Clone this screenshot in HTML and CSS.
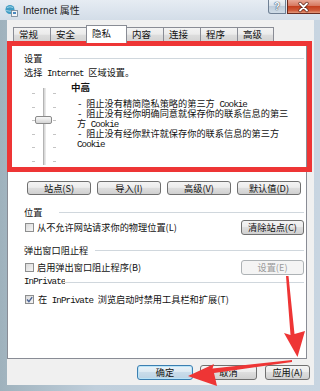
FILE: index.html
```html
<!DOCTYPE html>
<html lang="zh-CN">
<head>
<meta charset="utf-8">
<title>Internet 属性</title>
<link rel="stylesheet" href="styles.css">
</head>
<body>
<div class="window">
  <div class="titlebar">
    <svg class="app-icon" viewBox="0 0 13 13" width="13" height="13">
      <circle cx="5" cy="5.5" r="4.5" fill="#3f9cc4"/>
      <path d="M2 3.5 Q5 2 8 3.5 M1.2 6.5 Q5 8 8.8 6.5" stroke="#b8e2f0" stroke-width="0.8" fill="none"/>
      <rect x="6.5" y="6.5" width="6" height="6" fill="#f2f4f6" stroke="#6f8293" stroke-width="0.8"/>
      <rect x="8" y="8" width="3" height="2" fill="#4a88c0"/>
    </svg>
    <span class="title">Internet 属性</span>
    <div class="caption">
      <div class="cap-help">?</div>
      <div class="cap-close">
        <svg viewBox="0 0 33 14" width="33" height="14"><path d="M13 3.5 L20 10.5 M20 3.5 L13 10.5" stroke="#5b2418" stroke-width="3.2" stroke-linecap="round"/><path d="M13 3.5 L20 10.5 M20 3.5 L13 10.5" stroke="#ffffff" stroke-width="1.8" stroke-linecap="round"/></svg>
      </div>
    </div>
  </div>
  <div class="frame">
    <div class="client">
      <div class="tabs">
        <div class="tab t1">常规</div>
        <div class="tab t2">安全</div>
        <div class="tab sel">隐私</div>
        <div class="tab t4">内容</div>
        <div class="tab t5">连接</div>
        <div class="tab t6">程序</div>
        <div class="tab t7">高级</div>
      </div>
      <div class="panel">
        <div class="ghead"><span class="lbl w35">设置</span></div>
        <div class="intro">选择<span class="en"> Internet </span>区域设置。</div>
        <div class="level">
          <div class="slider">
            <div class="ticks"><i></i><i></i><i></i><i></i><i></i><i></i></div>
            <div class="track"></div>
            <div class="ticks"><i></i><i></i><i></i><i></i><i></i><i></i></div>
            <div class="thumb"></div>
          </div>
          <div class="level-text">
            <div class="level-name">中高</div>
            <div class="desc">
              <div><span class="en">- </span>阻止没有精简隐私策略的第三方<span class="en"> Cookie</span></div>
              <div><span class="en">- </span>阻止没有经你明确同意就保存你的联系信息的第三</div>
              <div>方<span class="en"> Cookie</span></div>
              <div><span class="en">- </span>阻止没有经你默许就保存你的联系信息的第三方</div>
              <div><span class="en">Cookie</span></div>
            </div>
          </div>
        </div>
        <div class="btn-row">
          <button class="btn">站点(S)</button>
          <button class="btn">导入(I)</button>
          <button class="btn">高级(V)</button>
          <button class="btn">默认值(D)</button>
        </div>
        <div class="ghead g2"><span class="lbl w35">位置</span></div>
        <div class="check-row r1">
          <span class="check"></span>
          <span class="check-label">从不允许网站请求你的物理位置(L)</span>
          <button class="btn row-btn">清除站点(C)</button>
        </div>
        <div class="ghead g3"><span class="lbl w71">弹出窗口阻止程</span></div>
        <div class="check-row r2">
          <span class="check"></span>
          <span class="check-label">启用弹出窗口阻止程序(B)</span>
          <button class="btn row-btn disabled">设置(E)</button>
        </div>
        <div class="ghead g4"><span class="lbl en w41">InPrivate</span></div>
        <div class="check-row r3">
          <span class="check checked"><svg viewBox="0 0 7 7" width="7" height="7"><path d="M1 3.6 L2.9 5.6 L6.2 1.2" stroke="#4a6395" stroke-width="1.4" fill="none"/></svg></span>
          <span class="check-label l3">在<span class="en"> InPrivate </span>浏览启动时禁用工具栏和扩展(T)</span>
        </div>
      </div>
      <div class="footer">
        <button class="btn fbtn ok">确定</button>
        <button class="btn fbtn cancel">取消</button>
        <button class="btn fbtn apply">应用(A)</button>
      </div>
    </div>
  </div>
  <div class="annot">
    <div class="redbox"></div>
    <svg class="arrows" viewBox="0 0 320 391" width="320" height="391">
      <polygon points="286,276 288.5,276 294.5,334 305,331 297.5,357 284,333 290.5,335" fill="#ee3535"/>
      <polygon points="188,376 214,364 212.5,368.5 292,360 292,362 214,373 217,386" fill="#ee3535"/>
    </svg>
  </div>
</div>
</body>
</html>
```

FILE: styles.css
```css
* { box-sizing: border-box; }
html, body { margin: 0; padding: 0; }
body {
  width: 320px;
  height: 391px;
  overflow: hidden;
  background: #b9c8d6;
  font-family: "Noto Sans CJK SC", "Liberation Sans", sans-serif;
  font-size: 9.2px;
  color: #111;
}
.window {
  position: relative;
  width: 320px;
  height: 391px;
  display: flex;
  flex-direction: column;
  background: linear-gradient(90deg, #9fb2bd, #c0cfdc 30%, #c8d5e1);
}
.titlebar {
  height: 20px;
  flex: none;
  display: flex;
  align-items: flex-start;
  background: linear-gradient(#e6ecf3, #d3dde8);
}
.app-icon { flex: none; margin: 4px 0 0 5px; }
.title {
  font-family: "Liberation Sans", "Noto Sans CJK SC", sans-serif;
  font-size: 10px;
  line-height: 21px;
  margin-left: 5px;
  color: #1c1c1c;
}
.caption { margin-left: auto; display: flex; }
.cap-help {
  width: 18px;
  height: 14px;
  margin-right: 1px;
  border: 1px solid #6f8094;
  border-top: none;
  border-radius: 0 0 0 3px;
  background: linear-gradient(#eef2f6, #d8e1ea 45%, #bfcddb 50%, #cfdbe6);
  font-family: "Liberation Sans", sans-serif;
  font-weight: bold;
  font-size: 10px;
  line-height: 13px;
  text-align: center;
  color: #f8fbff;
  text-shadow: 0 0 1px #2b3d56, 0 0 1px #2b3d56;
}
.cap-close {
  width: 33px;
  height: 14px;
  border: 1px solid #6a2a1e;
  border-top: none;
  border-right: none;
  background: linear-gradient(#e8a896, #d6775f 45%, #c4401f 50%, #cf5a39 80%, #e49a7c);
}
.cap-close svg { display: block; margin-left: -1px; }
.frame {
  flex: 1;
  padding: 0 6px 6px 7px;
  display: flex;
}
.client {
  flex: 1;
  background: #f0f0f0;
  display: flex;
  flex-direction: column;
}
.tabs {
  height: 22px;
  flex: none;
  padding: 5px 0 0 6px;
  display: flex;
  align-items: flex-end;
}
.tab {
  height: 15px;
  border: 1px solid #898c95;
  border-bottom: none;
  margin-right: -1px;
  background: linear-gradient(#f3f3f3, #ebebeb 45%, #dddddd 50%, #d2d2d2);
  padding-left: 5px;
  font-size: 9.5px;
  line-height: 13px;
  white-space: nowrap;
  color: #111;
}
.t1 { width: 38px; }
.t2 { width: 37px; }
.sel {
  width: 41px;
  height: 18px;
  margin-bottom: -1px;
  background: #ffffff;
  position: relative;
  z-index: 1;
  line-height: 14px;
}
.t4 { width: 38px; }
.t5 { width: 38px; }
.t6 { width: 38px; }
.t7 { width: 37px; }
.panel {
  width: 300px;
  height: 317px;
  flex: none;
  border: 1px solid #898c95;
  background: #ffffff;
  padding: 9px 2px 0 16px;
  display: flex;
  flex-direction: column;
}
.en {
  font-family: "Liberation Mono", monospace;
  letter-spacing: -0.92px;
  white-space: pre;
}
.ghead {
  display: flex;
  align-items: center;
  height: 12px;
  line-height: 12px;
  flex: none;
}
.ghead::after {
  content: "";
  flex: 1;
  height: 1px;
  background: #d0d7dd;
}
.lbl { white-space: nowrap; overflow: hidden; flex: none; }
.w35 { width: 35px; }
.w71 { width: 71px; }
.w41 { width: 41px; }
.intro {
  margin-top: 2px;
  height: 12px;
  line-height: 12px;
  white-space: nowrap;
}
.level {
  margin-top: 2px;
  height: 88px;
  flex: none;
  display: flex;
}
.slider {
  position: relative;
  width: 24px;
  margin-left: 8px;
  display: flex;
  justify-content: space-between;
  align-items: flex-start;
}
.ticks {
  width: 3px;
  height: 69px;
  margin-top: 13px;
  display: flex;
  flex-direction: column;
  justify-content: space-between;
}
.ticks i { display: block; height: 1px; background: #c4c4c4; }
.track {
  width: 3px;
  height: 77px;
  margin-top: 8px;
  border-left: 1px solid #b4b4b4;
  border-right: 1px solid #e8e8e8;
  background: #d9d9d9;
}
.thumb {
  position: absolute;
  left: 3px;
  top: 36px;
  width: 17px;
  height: 8px;
  border: 1px solid #8a8a8a;
  border-radius: 2px;
  background: linear-gradient(#f7f7f7, #e6e6e6 50%, #d4d4d4);
}
.level-text { margin-left: 15px; }
.level-name {
  margin-top: 1px;
  height: 12px;
  line-height: 12px;
  font-weight: bold;
  font-size: 9.5px;
}
.desc {
  margin-top: 5px;
  margin-left: 6px;
  line-height: 10px;
  white-space: nowrap;
}
.desc div { height: 10px; }
.btn {
  height: 15px;
  padding: 0;
  border: 1px solid #707070;
  border-radius: 3px;
  background: linear-gradient(#f4f4f4, #ececec 45%, #dedede 50%, #d0d0d0);
  font-family: "Noto Sans CJK SC", "Liberation Sans", sans-serif;
  font-size: 9.2px;
  line-height: 13px;
  text-align: center;
  color: #111;
  white-space: nowrap;
}
.btn-row {
  margin-top: 13px;
  margin-left: 3px;
  display: grid;
  grid-template-columns: repeat(4, 64px);
  column-gap: 6px;
}
.btn-row .btn { height: 14px; line-height: 12px; }
.g2 { margin-top: 11px; }
.g3 { margin-top: 9px; }
.g4 { margin-top: 1px; }
.check-row {
  display: flex;
  align-items: center;
  height: 15px;
  flex: none;
}
.r1 { margin-top: 2px; }
.r2 { margin-top: 4px; }
.r3 { margin-top: 4px; }
.check {
  width: 9px;
  height: 9px;
  margin-left: 1px;
  flex: none;
  border: 1px solid #8e8f8f;
  background: linear-gradient(135deg, #d9d9d9, #f6f6f6);
  display: flex;
  align-items: center;
  justify-content: center;
}
.check-label { margin-left: 3px; white-space: nowrap; line-height: 15px; }
.l3 { margin-left: 4px; }
.row-btn { margin-left: auto; width: 63px; }
.disabled {
  border-color: #adb2b5;
  background: #f4f4f4;
  color: #9a9a9a;
}
.footer {
  flex: 1;
  display: flex;
  justify-content: flex-end;
  align-items: flex-start;
  padding: 6px 4px 0 0;
}
.ok {
  width: 56px;
  margin-right: 7px;
  border-color: #3c7fb1;
  background: linear-gradient(#eaf3f9, #dce9f2 45%, #c9dcea 50%, #bcd3e4);
  box-shadow: inset 0 0 0 1px #b9e4f8;
}
.cancel { width: 57px; margin-right: 8px; }
.apply { width: 45px; }
.annot {
  position: absolute;
  left: 0;
  top: 0;
  width: 320px;
  height: 391px;
  pointer-events: none;
}
.redbox {
  position: absolute;
  left: 7px;
  top: 41px;
  width: 305px;
  height: 131px;
  border: 5px solid #ee3535;
}
.arrows { position: absolute; left: 0; top: 0; }
```
